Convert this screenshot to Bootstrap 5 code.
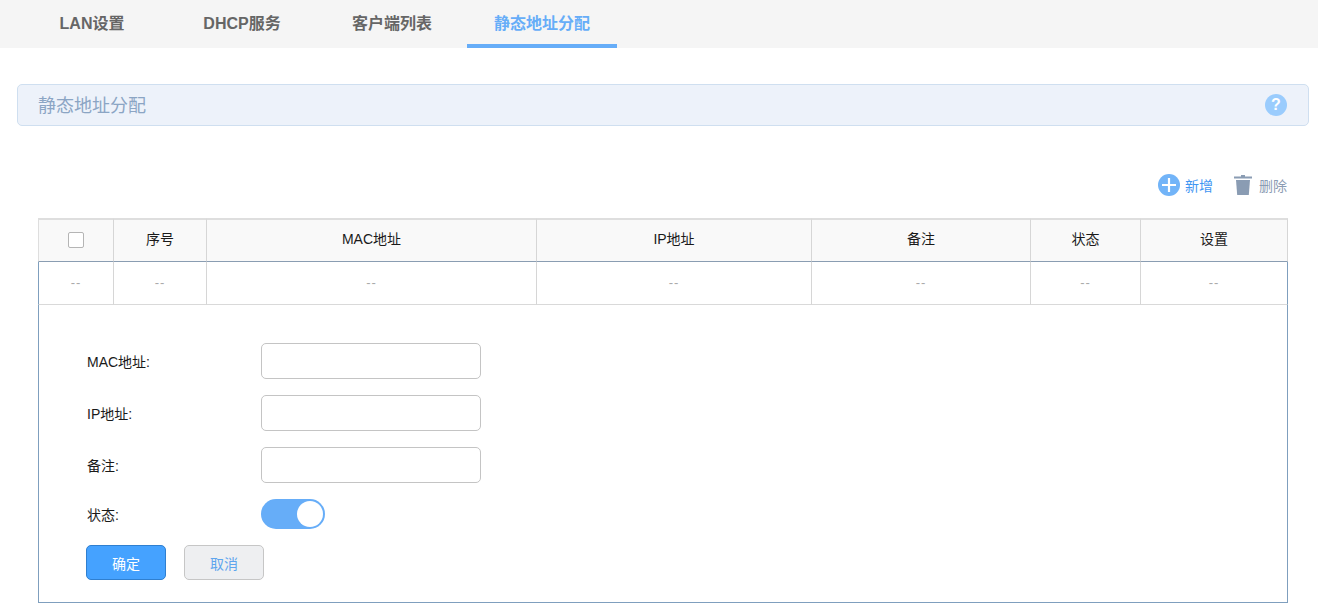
<!DOCTYPE html>
<html lang="zh-CN">
<head>
<meta charset="utf-8">
<title>静态地址分配</title>
<link rel="stylesheet" href="https://cdn.jsdelivr.net/npm/bootstrap@5.3.0/dist/css/bootstrap.min.css">
<style>
html,body{height:603px;overflow:hidden}
body{font-family:"Liberation Sans","Noto Sans CJK SC",sans-serif;font-size:14px;color:#1a1a1a;background:#fff}
.tabbar{height:48px;background:#f5f5f5;padding-left:17px}
.tabitem{width:150px;height:48px;line-height:48px;text-align:center;font-size:16px;font-weight:700;color:#666;text-decoration:none;display:block}
.tabitem.on{color:#66adf8;border-bottom:4px solid #66adf8}
.titlebar{height:42px;margin:36px 9px 0 17px;padding:0 21px 0 20px;background:#edf2fa;border:1px solid #cfdff0;border-radius:5px;font-size:18px;color:#8ba5c4}
.titlebar>span:first-child{padding-top:2px}
.helpdot{width:22px;height:22px;border-radius:50%;background:#9accfd;color:#fff;font-size:16px;font-weight:700;line-height:22px;text-align:center}
.actions{height:22px;margin:48px 31px 0 0;gap:21px}
.actlink{gap:5px;font-size:14px;color:#3f96f2;text-decoration:none}
.actlink.del{gap:7px;color:#8b9cb3}
.actlink span{padding-top:2px}
.panel{width:1250px;margin:22px 0 0 38px;height:385px;border:1px solid #7f9fbe;border-top:0;position:relative}
.gridtable{width:1250px;margin:0 0 0 -1px;table-layout:fixed;border-collapse:separate;border-spacing:0}
.gridtable th{height:44px;background:#f9f9f9;font-weight:400;text-align:center;vertical-align:middle;border-top:2px solid #dedede;border-bottom:1px solid #8a9db2;border-right:1px solid #d6d6d6;padding:0 0 3px}
.gridtable td{height:43px;font-size:13px;text-align:center;vertical-align:middle;color:#aaa;border-bottom:1px solid #d9d9d9;border-right:1px solid #d6d6d6;padding:0;letter-spacing:1px}
.gridtable th:first-child{border-left:1px solid #dedede}
.gridtable td:first-child{border-left:1px solid #7f9fbe}
.gridtable th:last-child{border-right:1px solid #d6d6d6}
.gridtable td:last-child{border-right:1px solid #7f9fbe}
.tickbox{width:16px;height:16px;display:inline-block;vertical-align:middle;background:#fff;border:1px solid #b5b5b5;border-radius:2px}
.formwrap{padding:38px 0 0 47px}
.formrow{height:36px;margin-bottom:16px}
.formrow.sw{height:30px}
.formlabel{width:175px;padding:3px 0 0 1px}
.plainfield{width:220px;height:36px;border:1px solid #c4c4c4;border-radius:5px;background:#fff}
.switchy{width:64px;height:30px;border-radius:15px;background:#66adf8;padding:2px 2px 2px 36px}
.knob{width:26px;height:26px;border-radius:50%;background:#fff;display:block}
.btnrow{gap:18px}
.btn.okbtn,.btn.nobtn{width:80px;height:35px;padding:2px 0 0;font-size:14px;border-radius:5px;line-height:33px}
.btn.okbtn{background:#45a2ff;border:1px solid #2f7fd0;color:#fff}
.btn.nobtn{background:#eeeff1;border:1px solid #c6c6c6;color:#5ea5ee}
</style>
</head>
<body>
<nav class="tabbar d-flex">
  <a class="tabitem" href="#">LAN设置</a>
  <a class="tabitem" href="#">DHCP服务</a>
  <a class="tabitem" href="#">客户端列表</a>
  <a class="tabitem on" href="#">静态地址分配</a>
</nav>
<div class="titlebar d-flex align-items-center justify-content-between">
  <span>静态地址分配</span>
  <span class="helpdot">?</span>
</div>
<div class="actions d-flex justify-content-end align-items-center">
  <a class="actlink d-flex align-items-center" href="#">
    <svg width="22" height="22" viewBox="0 0 22 22"><circle cx="11" cy="11" r="11" fill="#72b4f8"/><path d="M11 4v14M4 11h14" stroke="#fff" stroke-width="2.200"/></svg>
    <span>新增</span>
  </a>
  <a class="actlink del d-flex align-items-center" href="#">
    <svg width="18" height="20" viewBox="0 0 18 20"><path d="M7 0h4v1.500h7V3.500H0V1.500h7z" fill="#8a9cb3"/><path d="M2 5h14l-1.200 15H3.200z" fill="#8a9cb3"/></svg>
    <span>删除</span>
  </a>
</div>
<div class="panel">
  <table class="gridtable">
    <colgroup><col style="width:76px"><col style="width:93px"><col style="width:330px"><col style="width:275px"><col style="width:219px"><col style="width:110px"><col style="width:147px"></colgroup>
    <thead><tr><th><span class="tickbox"></span></th><th>序号</th><th>MAC地址</th><th>IP地址</th><th>备注</th><th>状态</th><th>设置</th></tr></thead>
    <tbody><tr><td>--</td><td>--</td><td>--</td><td>--</td><td>--</td><td>--</td><td>--</td></tr></tbody>
  </table>
  <div class="formwrap">
    <div class="formrow d-flex align-items-center"><span class="formlabel">MAC地址:</span><div class="plainfield"></div></div>
    <div class="formrow d-flex align-items-center"><span class="formlabel">IP地址:</span><div class="plainfield"></div></div>
    <div class="formrow d-flex align-items-center"><span class="formlabel">备注:</span><div class="plainfield"></div></div>
    <div class="formrow sw d-flex align-items-center"><span class="formlabel">状态:</span><div class="switchy"><span class="knob"></span></div></div>
    <div class="btnrow d-flex"><button class="btn okbtn" type="button">确定</button><button class="btn nobtn" type="button">取消</button></div>
  </div>
</div>
<script src="https://cdn.jsdelivr.net/npm/bootstrap@5.3.0/dist/js/bootstrap.bundle.min.js"></script>
</body>
</html>
